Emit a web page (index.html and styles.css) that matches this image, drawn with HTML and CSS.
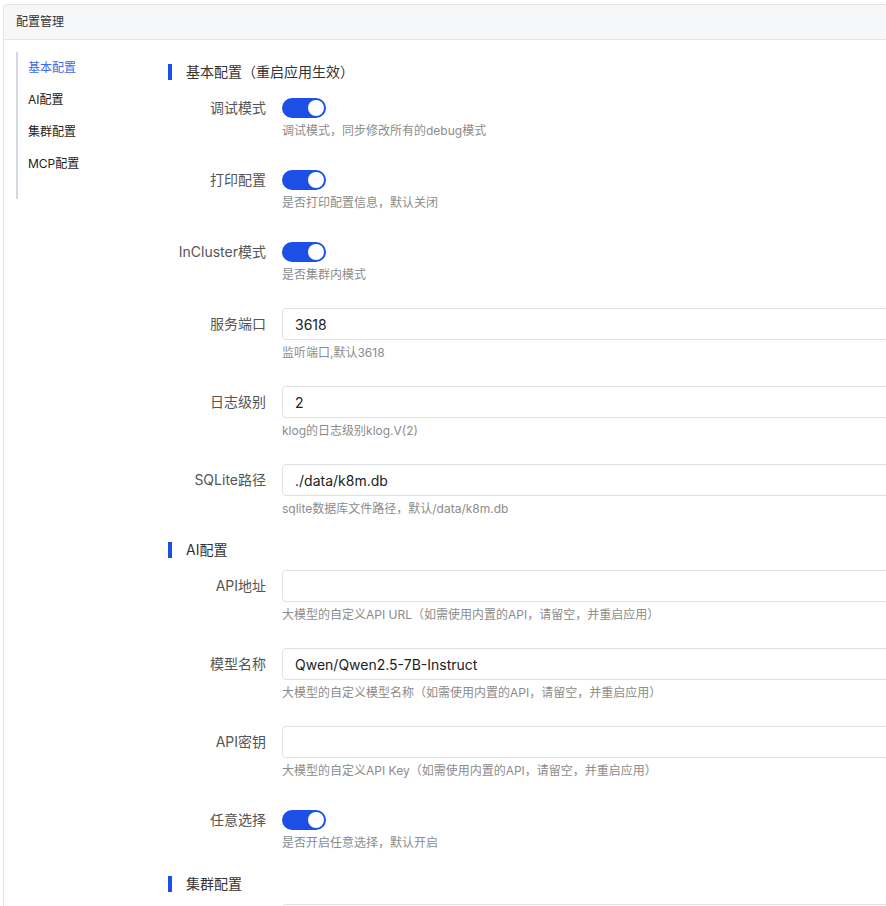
FILE: index.html
```html
<!DOCTYPE html>
<html lang="zh-CN">
<head>
<meta charset="utf-8">
<title>配置管理</title>
<link rel="stylesheet" href="styles.css">
</head>
<body>
<div class="card">
  <div class="card-header">配置管理</div>
  <div class="card-body">
    <nav class="side-nav">
      <a class="nav-item active">基本配置</a>
      <a class="nav-item">AI配置</a>
      <a class="nav-item">集群配置</a>
      <a class="nav-item">MCP配置</a>
    </nav>
    <div class="content">
      <h3 class="section-title">基本配置（重启应用生效）</h3>

      <div class="form-item">
        <label class="form-label">调试模式</label>
        <div class="form-control">
          <span class="switch on"><span class="knob"></span></span>
          <div class="help">调试模式，同步修改所有的debug模式</div>
        </div>
      </div>

      <div class="form-item">
        <label class="form-label">打印配置</label>
        <div class="form-control">
          <span class="switch on"><span class="knob"></span></span>
          <div class="help">是否打印配置信息，默认关闭</div>
        </div>
      </div>

      <div class="form-item">
        <label class="form-label">InCluster模式</label>
        <div class="form-control">
          <span class="switch on"><span class="knob"></span></span>
          <div class="help">是否集群内模式</div>
        </div>
      </div>

      <div class="form-item">
        <label class="form-label">服务端口</label>
        <div class="form-control">
          <input class="input" value="3618">
          <div class="help">监听端口,默认3618</div>
        </div>
      </div>

      <div class="form-item">
        <label class="form-label">日志级别</label>
        <div class="form-control">
          <input class="input" value="2">
          <div class="help">klog的日志级别klog.V(2)</div>
        </div>
      </div>

      <div class="form-item">
        <label class="form-label">SQLite路径</label>
        <div class="form-control">
          <input class="input" value="./data/k8m.db">
          <div class="help">sqlite数据库文件路径，默认/data/k8m.db</div>
        </div>
      </div>

      <h3 class="section-title">AI配置</h3>

      <div class="form-item">
        <label class="form-label">API地址</label>
        <div class="form-control">
          <input class="input" value="">
          <div class="help">大模型的自定义API URL（如需使用内置的API，请留空，并重启应用）</div>
        </div>
      </div>

      <div class="form-item">
        <label class="form-label">模型名称</label>
        <div class="form-control">
          <input class="input" value="Qwen/Qwen2.5-7B-Instruct">
          <div class="help">大模型的自定义模型名称（如需使用内置的API，请留空，并重启应用）</div>
        </div>
      </div>

      <div class="form-item">
        <label class="form-label">API密钥</label>
        <div class="form-control">
          <input class="input" value="">
          <div class="help">大模型的自定义API Key（如需使用内置的API，请留空，并重启应用）</div>
        </div>
      </div>

      <div class="form-item">
        <label class="form-label">任意选择</label>
        <div class="form-control">
          <span class="switch on"><span class="knob"></span></span>
          <div class="help">是否开启任意选择，默认开启</div>
        </div>
      </div>

      <h3 class="section-title">集群配置</h3>

      <div class="form-item">
        <label class="form-label">&nbsp;</label>
        <div class="form-control">
          <input class="input" value="">
        </div>
      </div>
    </div>
  </div>
</div>
</body>
</html>
```

FILE: styles.css
```css
html, body {
  overflow: hidden;
}
body {
  margin: 4px 0 0 3px;
  font-family: Inter, "Noto Sans CJK SC", sans-serif;
  color: #333;
  background: #fff;
}
.card {
  width: 940px;
  border: 1px solid #e3e4e6;
  border-radius: 4px;
  background: #fff;
}
.card-header {
  height: 34px;
  line-height: 34px;
  padding-left: 12px;
  font-size: 12px;
  color: #333;
  background: #f6f7f9;
  border-bottom: 1px solid #e3e4e6;
  border-radius: 4px 4px 0 0;
}
.card-body {
  display: flex;
  gap: 12px;
  padding: 12px 0 0 12px;
}
.side-nav {
  flex: 0 0 138px;
  align-self: flex-start;
  display: flex;
  flex-direction: column;
  border-left: 2px solid #d3d9e0;
  padding-bottom: 19px;
}
.nav-item {
  display: block;
  height: 32px;
  line-height: 32px;
  padding-left: 10px;
  font-size: 12px;
  color: #222;
}
.nav-item.active {
  color: #3a6bf0;
}
.content {
  flex: 1;
  padding-top: 12px;
}
.section-title {
  margin: 0 0 12px;
  height: 16px;
  line-height: 16px;
  border-left: 4px solid #1c4fe6;
  padding-left: 14px;
  font-size: 14px;
  font-weight: 400;
  color: #333;
}
.form-item {
  display: flex;
  gap: 16px;
  margin-bottom: 24px;
}
.form-label {
  flex: 0 0 98px;
  text-align: right;
  line-height: 32px;
  font-size: 14px;
  color: #555;
  white-space: nowrap;
}
.form-control {
  flex: 1;
  display: flex;
  flex-direction: column;
  align-items: flex-start;
}
.switch {
  position: relative;
  display: block;
  width: 44px;
  height: 20px;
  margin-top: 6px;
  border-radius: 10px;
  background: #c9cdd4;
}
.switch.on {
  background: #1c4fe6;
}
.knob {
  position: absolute;
  top: 2px;
  left: 2px;
  width: 16px;
  height: 16px;
  border-radius: 50%;
  background: #fff;
}
.switch.on .knob {
  left: 26px;
}
.input {
  box-sizing: border-box;
  width: 100%;
  height: 32px;
  padding: 0 12px;
  border: 1px solid #dfe1e5;
  border-radius: 4px;
  font-family: Inter, "Noto Sans CJK SC", sans-serif;
  font-size: 14px;
  color: #222;
  background: #fff;
  outline: none;
}
.help {
  margin-top: 4px;
  line-height: 18px;
  font-size: 12px;
  color: #8c8c8c;
}
```
